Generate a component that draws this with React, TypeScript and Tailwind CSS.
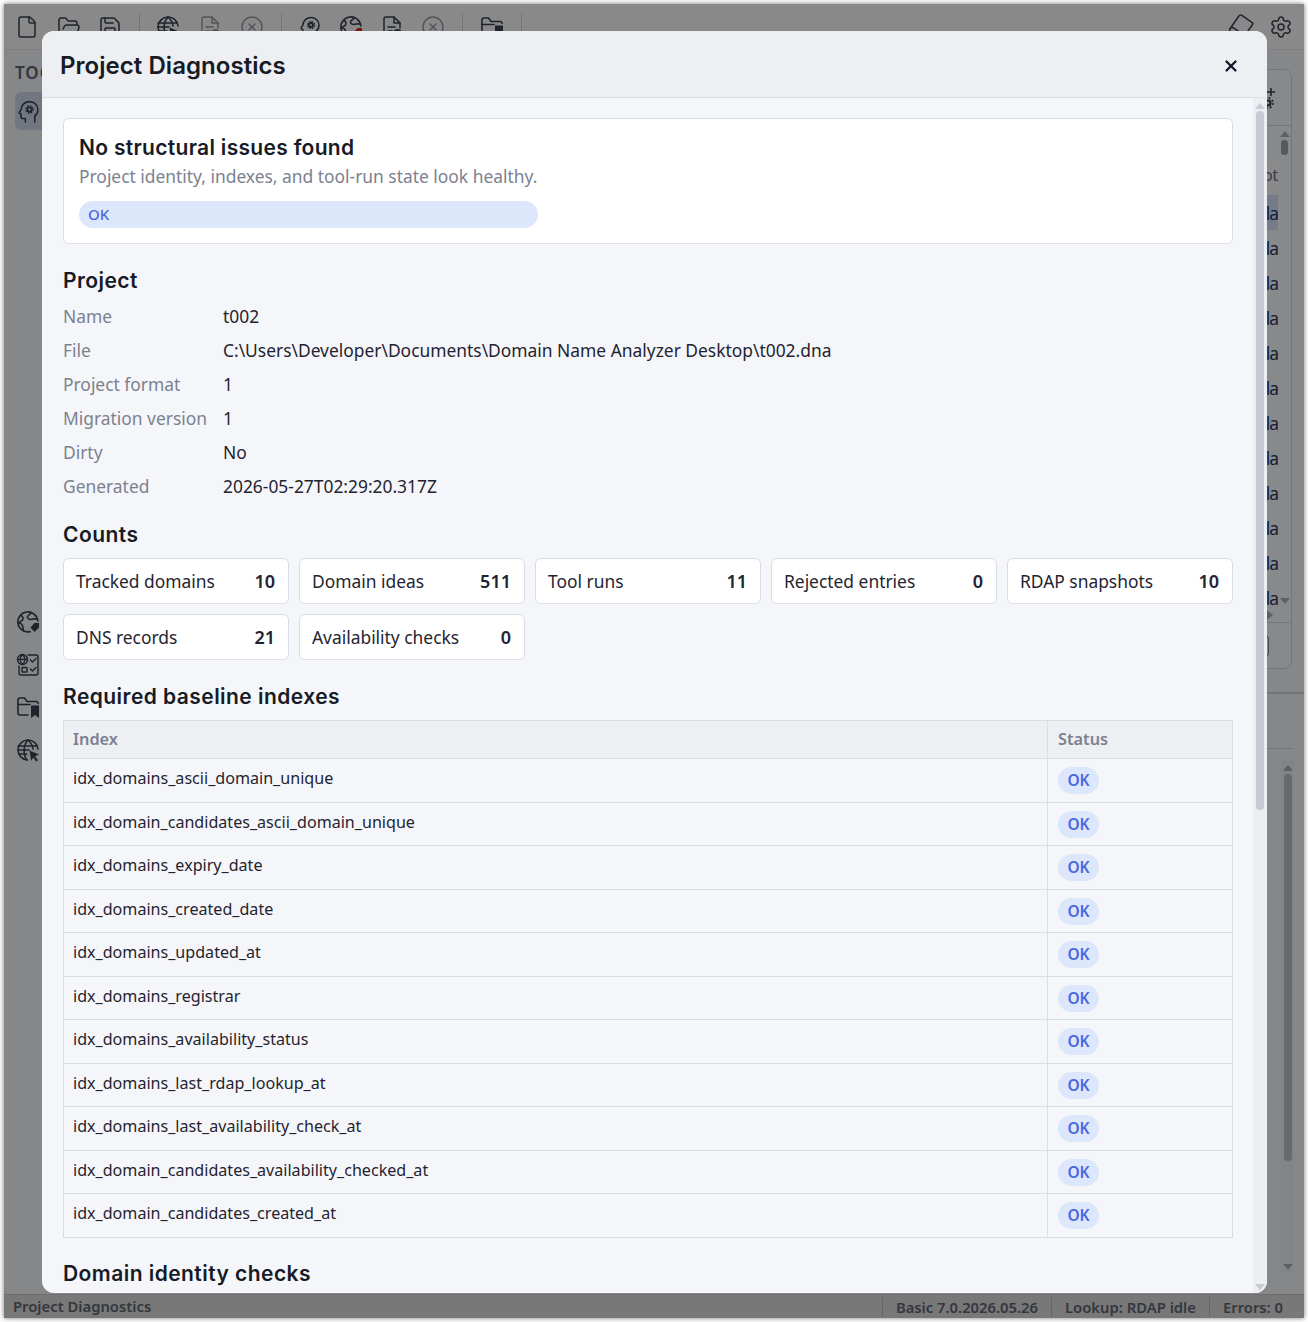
import {
  File,
  FolderOpen,
  Save,
  FileText,
  CircleX,
  Book,
  Settings,
  X,
} from "lucide-react";

const PROJECT_ROWS = [
  ["Name", "t002"],
  ["File", "C:\\Users\\Developer\\Documents\\Domain Name Analyzer Desktop\\t002.dna"],
  ["Project format", "1"],
  ["Migration version", "1"],
  ["Dirty", "No"],
  ["Generated", "2026-05-27T02:29:20.317Z"],
];

const COUNTS = [
  ["Tracked domains", "10"],
  ["Domain ideas", "511"],
  ["Tool runs", "11"],
  ["Rejected entries", "0"],
  ["RDAP snapshots", "10"],
  ["DNS records", "21"],
  ["Availability checks", "0"],
];

const INDEXES = [
  "idx_domains_ascii_domain_unique",
  "idx_domain_candidates_ascii_domain_unique",
  "idx_domains_expiry_date",
  "idx_domains_created_date",
  "idx_domains_updated_at",
  "idx_domains_registrar",
  "idx_domains_availability_status",
  "idx_domains_last_rdap_lookup_at",
  "idx_domains_last_availability_check_at",
  "idx_domain_candidates_availability_checked_at",
  "idx_domain_candidates_created_at",
];

const HEADING = "font-['Inter',sans-serif] font-semibold text-[#161b26]";

function HeadGear({ size = 24 }: { size?: number }) {
  return (
    <svg width={size} height={size} viewBox="0 0 24 24" fill="none" stroke="currentColor" strokeWidth="1.500" strokeLinecap="round" strokeLinejoin="round">
      <path d="M9 22v-3.200H6.600a1.800 1.800 0 0 1-1.800-1.800v-2.600L3 13.400l1.800-3.200C5.200 5.600 8.600 2.500 13 2.500c4.600 0 8 3.400 8 7.800 0 2.800-1.200 4.600-3 6V22" />
      <circle cx="13" cy="10" r="3.400" strokeWidth="1.400" strokeDasharray="1.600 1.070" strokeLinecap="butt" />
      <circle cx="13" cy="10" r="2.900" fill="currentColor" stroke="none" />
      <circle cx="13" cy="10" r="1.100" fill="#f5f6f9" stroke="none" />
    </svg>
  );
}

function GlobeTag({ size = 24, red = false }: { size?: number; red?: boolean }) {
  return (
    <svg width={size} height={size} viewBox="0 0 24 24" fill="none" stroke="currentColor" strokeWidth="1.600" strokeLinecap="round" strokeLinejoin="round">
      <path d="M14 21.600A10 10 0 1 1 21.800 11" />
      <path d="M5 5.500c2 1 2.500 3 1.500 4.500S3 11.500 3 13c2 0 3 1 3.500 3s1 3 1 5" />
      <path d="M15 2.800c-1 2-3 2.200-3.500 4s2 3 4 2.500 3.500-.5 5-.3" />
      <path d="M14.500 17.500l4-4.500h4.500v4.500l-4.500 4.500z" fill={red ? "#dc2626" : "currentColor"} stroke="none" />
    </svg>
  );
}

function GlobeChecks({ size = 24 }: { size?: number }) {
  return (
    <svg width={size} height={size} viewBox="0 0 24 24" fill="none" stroke="currentColor" strokeWidth="1.400" strokeLinecap="round" strokeLinejoin="round">
      <path d="M12 2h8a2 2 0 0 1 2 2v16a2 2 0 0 1-2 2H5a2 2 0 0 1-2-2v-7" />
      <circle cx="6.500" cy="6.500" r="5" />
      <path d="M1.500 6.500h10M6.500 1.500c-3 3-3 7 0 10M6.500 1.500c3 3 3 7 0 10" />
      <path d="M14.500 7l2 2 3.500-3.500M14.500 16l2 2 3.500-3.500" />
      <rect x="6" y="14.500" width="5" height="4.500" rx="0.500" />
    </svg>
  );
}

function FolderMark({ size = 24 }: { size?: number }) {
  return (
    <svg width={size} height={size} viewBox="0 0 24 24" fill="none" stroke="currentColor" strokeWidth="1.600" strokeLinecap="round" strokeLinejoin="round">
      <path d="M12 20H4a2 2 0 0 1-2-2V5a2 2 0 0 1 2-2h4.500l2.500 3.500h9a2 2 0 0 1 2 2" />
      <path d="M2 9.500h12" />
      <path d="M15 10.500h8V23l-4-3-4 3z" fill="currentColor" stroke="none" />
    </svg>
  );
}

function GlobeCursor({ size = 24 }: { size?: number }) {
  return (
    <svg width={size} height={size} viewBox="0 0 24 24" fill="none" stroke="currentColor" strokeWidth="1.600" strokeLinecap="round" strokeLinejoin="round">
      <path d="M11.500 22A10 10 0 1 1 22 11" />
      <path d="M2 12h11M2 8h19M2.800 16h8M12 2c-5 5-5 15-1 20M12 2c3 2.500 4.500 5.500 5 9" />
      <path d="M13.500 12.500l9.500 4-4 1.700 3 4-1.800 1.300-3-4-2 3.500z" fill="currentColor" stroke="none" />
    </svg>
  );
}

function FileBadge({ size = 24, className }: { size?: number; className?: string }) {
  return (
    <svg width={size} height={size} viewBox="0 0 24 24" fill="none" stroke="currentColor" strokeWidth="1.500" strokeLinecap="round" strokeLinejoin="round" className={className}>
      <path d="M11 22H6a2 2 0 0 1-2-2V4a2 2 0 0 1 2-2h8l6 6v5" />
      <path d="M14 2v6h6M8 12h7M8 16h4" />
      <circle cx="17.500" cy="18.500" r="4.500" fill="currentColor" stroke="none" />
    </svg>
  );
}

function PlusGear() {
  return (
    <svg width="22" height="24" viewBox="0 0 22 24" fill="none" stroke="currentColor" strokeLinecap="round">
      <path d="M16 2.500v7M12.500 6h7" strokeWidth="1.600" />
      <circle cx="13" cy="17" r="5" strokeWidth="1.600" strokeDasharray="2 1.900" strokeLinecap="butt" />
      <circle cx="13" cy="17" r="3.600" fill="currentColor" stroke="none" />
      <circle cx="13" cy="17" r="1.400" fill="#f8f9fb" stroke="none" />
    </svg>
  );
}

function Sep() {
  return <div className="w-px h-[28px] bg-[#cfd3da]" />;
}

function Arrow({ dir, className }: { dir: "up" | "down" | "right"; className: string }) {
  if (dir === "right") {
    return (
      <svg width="6" height="10" viewBox="0 0 6 10" className={className}>
        <path d="M0 0l6 5-6 5z" fill="currentColor" />
      </svg>
    );
  }
  return (
    <svg width="10" height="6" viewBox="0 0 10 6" className={className}>
      <path d={dir === "up" ? "M5 0l5 6H0z" : "M0 0h10L5 6z"} fill="currentColor" />
    </svg>
  );
}

function Pill() {
  return (
    <span className="inline-flex items-center justify-center w-[41px] h-[27px] rounded-full bg-[#dde7fb] text-[#4a66e0] text-[15.500px] font-semibold leading-none">
      OK
    </span>
  );
}

function AppBehind() {
  return (
    <div className="h-full flex flex-col bg-[#f5f6f9] text-[#1f2937]">
      {/* toolbar */}
      <div className="h-[46px] flex items-center pl-[11px] pr-[11px] bg-[#fafafb] border-b border-[#e6e8ec] shrink-0 text-[#374151]">
        <div className="flex items-center gap-[17.500px]">
          <File size={24} strokeWidth={1.5} />
          <FolderOpen size={24} strokeWidth={1.5} />
          <Save size={24} strokeWidth={1.5} />
        </div>
        <div className="ml-[17px] mr-[16px]"><Sep /></div>
        <div className="flex items-center gap-[18px]">
          <GlobeCursor />
          <FileBadge className="opacity-50" />
          <CircleX size={24} strokeWidth={1.5} className="opacity-50" />
        </div>
        <div className="ml-[17px] mr-[16px]"><Sep /></div>
        <div className="flex items-center gap-[17px]">
          <HeadGear />
          <GlobeTag red />
          <FileBadge />
          <CircleX size={24} strokeWidth={1.5} className="opacity-50" />
        </div>
        <div className="mx-[17px]"><Sep /></div>
        <FolderMark />
        <div className="mx-[17px]"><Sep /></div>
        <div className="flex-1" />
        <div className="flex items-center gap-[16px]">
          <Book size={24} strokeWidth={1.5} className="rotate-[35deg]" />
          <Settings size={24} strokeWidth={1.5} />
        </div>
      </div>

      <div className="flex-1 flex min-h-0">
        {/* sidebar */}
        <div className="w-[38px] pl-[11px] pt-[11px] flex flex-col text-[#374151] shrink-0 overflow-hidden">
          <div className="text-[17px] font-semibold tracking-[1px] leading-[24px] text-[#5b6370] whitespace-nowrap">TOOLS</div>
          <div className="mt-[7px] h-[38px] w-[60px] rounded-[6px] bg-[#d0d8ea] flex items-center pl-[1px] shrink-0">
            <HeadGear size={25} />
          </div>
          <div className="mt-[480px] flex flex-col gap-[18.500px] pl-[1px]">
            <GlobeTag />
            <GlobeChecks />
            <FolderMark />
            <GlobeCursor />
          </div>
        </div>
        <div className="flex-1" />
        {/* right column */}
        <div className="w-[130px] shrink-0 flex flex-col">
          <div className="mr-[12px] mt-[19px] h-[600px] border border-[#d3d6dc] rounded-[8px] flex flex-col bg-[#f8f9fb] shrink-0 overflow-hidden">
            <div className="h-[56px] border-b border-[#d3d6dc] flex items-center justify-end pr-[14px] shrink-0 text-[#374151]">
              <PlusGear />
            </div>
            <div className="h-[497px] shrink-0 flex min-h-0 border-b border-[#d3d6dc]">
              <div className="flex-1 flex flex-col pt-[34px] min-w-0 overflow-hidden">
                <div className="h-[29px] bg-[#fbfbfc] flex justify-end items-center text-[#6b7280] text-[17px] shrink-0 tracking-[-0.5px]">Slot</div>
                <div className="h-[6px] shrink-0" />
                <div className="flex-1 min-h-0 overflow-hidden">
                  {Array.from({ length: 12 }).map((_, i) => (
                    <div key={i} className={`h-[35px] pt-[1px] flex justify-end items-center text-[17.400px] tracking-[-1px] text-[#1e3a66] ${i === 0 ? "bg-[#d6e1f7]" : ""}`}>
                      Pla
                    </div>
                  ))}
                </div>
                <div className="h-[15px] shrink-0 flex items-center justify-end pr-[5px]">
                  <Arrow dir="right" className="text-[#a9aeb8]" />
                </div>
              </div>
              <div className="w-[13px] shrink-0 flex flex-col items-center pt-[5px]">
                <Arrow dir="up" className="text-[#a9aeb8]" />
                <div className="mt-[3px] w-[7px] h-[15px] rounded-full bg-[#9ca3af]" />
                <div className="mt-auto mb-[18px]"><Arrow dir="down" className="text-[#a9aeb8]" /></div>
              </div>
            </div>
            <div className="flex-1 flex items-center justify-end pr-[22px]">
              <div className="h-[22px] w-[40px] border border-[#7a8089] rounded-[4px]" />
            </div>
          </div>
          <div className="mt-[23px] h-[2px] bg-[#d4d6da] shrink-0" />
          <div className="mr-[10px] mt-[54px] h-px bg-[#d4d6da] shrink-0" />
          <div className="ml-auto mr-[10px] mt-[11px] w-[13px] h-[513px] shrink-0 bg-[#eef0f3] flex flex-col items-center pt-[5px] pb-[3px]">
            <Arrow dir="up" className="text-[#a9aeb8]" />
            <div className="mt-[3px] w-[8px] h-[387px] rounded-full bg-[#bcc0c8]" />
            <div className="mt-auto"><Arrow dir="down" className="text-[#a9aeb8]" /></div>
          </div>
        </div>
      </div>

      {/* status bar */}
      <div className="h-[24px] shrink-0 bg-[#dadada] border-t border-[#c8c9cc] flex items-center text-[14.800px] font-semibold text-[#5f6671]">
        <span className="pl-[9px] flex-1">Project Diagnostics</span>
        <span className="px-[13px] border-l border-[#b9bbc0] leading-[20px]">Basic 7.0.2026.05.26</span>
        <span className="px-[13px] border-l border-[#b9bbc0] leading-[20px]">Lookup: RDAP idle</span>
        <span className="pl-[13px] pr-[21px] border-l border-[#b9bbc0] leading-[20px]">Errors: 0</span>
      </div>
    </div>
  );
}

export default function App() {
  return (
    <div className="relative w-[1308px] h-[1322px] bg-white p-[4px] overflow-hidden font-['Noto_Sans',sans-serif]">
      <div className="relative h-full shadow-[0_0_5px_rgba(0,0,0,0.55)] overflow-hidden">
        <AppBehind />
        <div className="absolute inset-0 bg-black/45" />
      </div>

      {/* dialog */}
      <div className="absolute left-[42px] top-[31px] w-[1225px] h-[1262px] rounded-[12px] overflow-hidden flex flex-col bg-[#f5f6f9]">
        <div className="h-[67px] shrink-0 bg-[#eeeff3] border-b border-[#d9dde5] flex items-center pl-[18px] pr-[27px] pt-[3px]">
          <h1 className={`${HEADING} flex-1 text-[24px] tracking-[0.05px]`}>Project Diagnostics</h1>
          <X size={18} strokeWidth={3} className="text-[#111827]" />
        </div>

        <div className="flex-1 flex min-h-0">
          <div className="flex-1 min-w-0 overflow-hidden pl-[21px] pr-[20px] pt-[20px]">
            {/* summary card */}
            <div className="h-[126px] bg-white border border-[#d9dde5] rounded-[6px] pl-[15px] pt-[14px]">
              <div className="w-[459px] flex flex-col">
                <div className={`${HEADING} text-[21px] leading-[29px] tracking-[0.3px] whitespace-nowrap`}>No structural issues found</div>
                <div className="text-[17.400px] leading-[28px] text-[#7b8190] whitespace-nowrap">Project identity, indexes, and tool-run state look healthy.</div>
                <div className="mt-[11px] h-[27px] rounded-full bg-[#dde7fb] text-[#4a66e0] text-[15px] font-medium pl-[9px] flex items-center">OK</div>
              </div>
            </div>

            <h2 className={`${HEADING} text-[21px] leading-[30px] tracking-[0.45px] mt-[22px]`}>Project</h2>
            <div className="mt-[3px] flex flex-col">
              {PROJECT_ROWS.map(([label, value]) => (
                <div key={label} className="h-[34px] flex items-center text-[17.400px]">
                  <span className="w-[160px] shrink-0 text-[#7b8190]">{label}</span>
                  <span className="text-[#1f2430]">{value}</span>
                </div>
              ))}
            </div>

            <h2 className={`${HEADING} text-[21px] leading-[30px] tracking-[0.45px] mt-[17px]`}>Counts</h2>
            <div className="mt-[8px] grid grid-cols-5 gap-[10px]">
              {COUNTS.map(([label, value]) => (
                <div key={label} className="h-[46px] bg-white border border-[#d9dde5] rounded-[6px] pl-[12px] pr-[13px] flex items-center justify-between text-[17.400px] text-[#1f2430]">
                  <span className="whitespace-nowrap">{label}</span>
                  <span className="font-semibold text-[18px]">{value}</span>
                </div>
              ))}
            </div>

            <h2 className={`${HEADING} text-[21px] leading-[30px] tracking-[0.45px] mt-[22px]`}>Required baseline indexes</h2>
            <table className="mt-[8px] w-full border-collapse text-[16.100px] text-[#1f2430]">
              <thead>
                <tr className="h-[38px] bg-[#eeeff3] text-[#7b8190] text-left text-[16.300px]">
                  <th className="border border-[#d9dde5] pl-[9px] pr-[10px] font-semibold">Index</th>
                  <th className="border border-[#d9dde5] px-[10px] font-semibold w-[185px]">Status</th>
                </tr>
              </thead>
              <tbody>
                {INDEXES.map((name) => (
                  <tr key={name} className="h-[43.500px]">
                    <td className="border border-[#d9dde5] pl-[9px] pr-[10px] pt-[6px] align-top leading-[26px]">{name}</td>
                    <td className="border border-[#d9dde5] px-[10px] align-middle">
                      <div className="flex pt-[1px]"><Pill /></div>
                    </td>
                  </tr>
                ))}
              </tbody>
            </table>

            <h2 className={`${HEADING} text-[21px] leading-[30px] tracking-[0.45px] mt-[21px]`}>Domain identity checks</h2>
          </div>

          {/* dialog scrollbar */}
          <div className="w-[14px] shrink-0 bg-[#eceef2] flex flex-col items-center pt-[5px] pb-[3px]">
            <Arrow dir="up" className="text-[#c5cad3]" />
            <div className="mt-[2px] w-[8px] h-[699px] rounded-full bg-[#c5cad3]" />
            <div className="mt-auto"><Arrow dir="down" className="text-[#c5cad3]" /></div>
          </div>
        </div>
      </div>
    </div>
  );
}
